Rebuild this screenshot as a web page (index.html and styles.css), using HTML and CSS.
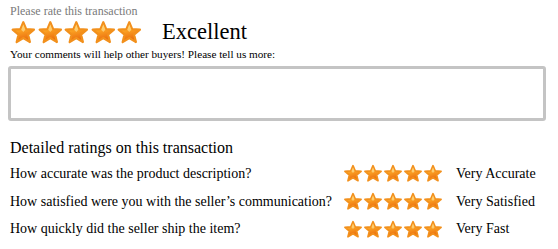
FILE: index.html
```html
<!DOCTYPE html>
<html>
<head>
<meta charset="utf-8">
<link rel="stylesheet" href="styles.css">
</head>
<body>
<svg width="0" height="0" class="defs" aria-hidden="true">
  <defs>
    <linearGradient id="sg" x1="0" y1="0" x2="0.25" y2="1">
      <stop offset="0" stop-color="#ffdc5a"/>
      <stop offset="0.45" stop-color="#fca524"/>
      <stop offset="1" stop-color="#ea6a0e"/>
    </linearGradient>
    <symbol id="star" viewBox="0 0 24 23">
      <path d="M12 2 L14.7 8.4 L21.8 8.9 L16.4 13.4 L18.1 20.3 L12 16.6 L5.9 20.3 L7.6 13.4 L2.2 8.9 L9.3 8.4 Z" fill="url(#sg)" stroke="#f2901c" stroke-width="2" stroke-linejoin="round"/>
      <path d="M12 4 L13.9 8.9 L12 11 L10.1 8.9 Z" fill="#fff4b8" opacity="0.5"/>
    </symbol>
  </defs>
</svg>
<div class="page">
  <div class="prompt">Please rate this transaction</div>
  <div class="overall">
    <div class="stars big">
      <svg><use href="#star"/></svg><svg><use href="#star"/></svg><svg><use href="#star"/></svg><svg><use href="#star"/></svg><svg><use href="#star"/></svg>
    </div>
    <span class="verdict">Excellent</span>
  </div>
  <div class="hint">Your comments will help other buyers! Please tell us more:</div>
  <textarea class="comments"></textarea>
  <h2 class="detail-title">Detailed ratings on this transaction</h2>
  <div class="grid">
    <div class="q">How accurate was the product description?</div>
    <div class="stars small"><svg><use href="#star"/></svg><svg><use href="#star"/></svg><svg><use href="#star"/></svg><svg><use href="#star"/></svg><svg><use href="#star"/></svg></div>
    <div class="lbl">Very Accurate</div>
    <div class="q">How satisfied were you with the seller’s communication?</div>
    <div class="stars small"><svg><use href="#star"/></svg><svg><use href="#star"/></svg><svg><use href="#star"/></svg><svg><use href="#star"/></svg><svg><use href="#star"/></svg></div>
    <div class="lbl">Very Satisfied</div>
    <div class="q">How quickly did the seller ship the item?</div>
    <div class="stars small"><svg><use href="#star"/></svg><svg><use href="#star"/></svg><svg><use href="#star"/></svg><svg><use href="#star"/></svg><svg><use href="#star"/></svg></div>
    <div class="lbl">Very Fast</div>
  </div>
</div>
</body>
</html>
```
FILE: styles.css
```css
html, body {
  margin: 0;
  padding: 0;
  background: #fff;
}
.defs {
  position: absolute;
  width: 0;
  height: 0;
}
.page {
  padding: 4px 10px 0 10px;
  font-family: "Liberation Serif", "Times New Roman", serif;
  color: #000;
}
.prompt {
  font-size: 12px;
  line-height: 14px;
  color: #7a7a7a;
}
.overall {
  display: flex;
  align-items: center;
  height: 26px;
  margin-top: 1px;
}
.stars {
  display: flex;
}
.stars svg {
  display: block;
}
.big svg {
  width: 26.6px;
  height: 25px;
}
.verdict {
  font-size: 22.5px;
  margin-left: 19px;
  line-height: 26px;
}
.hint {
  font-size: 11.2px;
  line-height: 14px;
  margin-top: 2px;
}
.comments {
  display: block;
  box-sizing: border-box;
  width: 538px;
  height: 55px;
  margin: 5px 0 0 -2px;
  border: 3px solid #c4c4c4;
  border-radius: 3px;
  resize: none;
  outline: none;
  background: #fff;
}
.detail-title {
  font-size: 16px;
  font-weight: normal;
  line-height: 18px;
  margin: 18px 0 0 0;
}
.grid {
  display: grid;
  grid-template-columns: 333px 100px auto;
  grid-auto-rows: 27.7px;
  align-items: center;
  margin-top: 3px;
}
.q, .lbl {
  font-size: 14px;
  line-height: 16px;
}
.lbl {
  padding-left: 13px;
}
.small svg {
  width: 20px;
  height: 19px;
}
```
